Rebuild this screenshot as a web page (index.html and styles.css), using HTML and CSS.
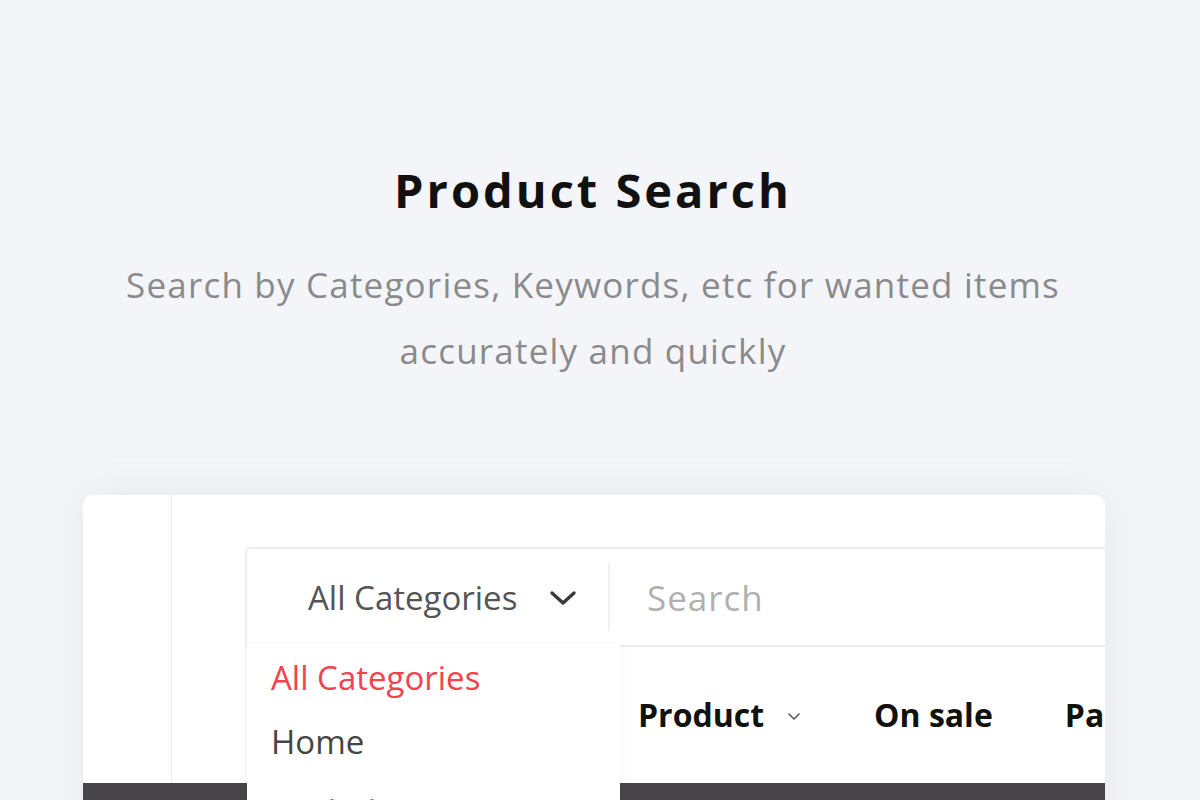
FILE: index.html
```html
<!DOCTYPE html>
<html>
<head>
<meta charset="utf-8">
<link rel="stylesheet" href="styles.css">
</head>
<body>
<section class="hero">
  <h1 class="title">Product Search</h1>
  <p class="subtitle">Search by Categories, Keywords, etc for wanted items<br>accurately and quickly</p>
</section>
<div class="card">
  <div class="side"></div>
  <div class="main">
    <div class="search-wrap">
      <div class="search">
        <div class="cat">
          <span>All Categories</span>
          <svg class="chev" width="28" height="18" viewBox="0 0 28 18"><polyline points="3,4 14,14 25,4" fill="none" stroke="#3a3a3a" stroke-width="3.4" stroke-linecap="round" stroke-linejoin="round"/></svg>
        </div>
        <div class="divider"></div>
        <div class="input">Search</div>
      </div>
      <div class="dropdown">
        <div class="opt active">All Categories</div>
        <div class="opt">Home</div>
        <div class="opt sub active">Clothing</div>
      </div>
    </div>
    <nav class="nav">
      <span class="nav-item current">Home</span>
      <span class="nav-item">Product <svg class="small-chev" width="16" height="10" viewBox="0 0 16 10"><polyline points="3,3 8,8 13,3" fill="none" stroke="#555" stroke-width="1.6" stroke-linecap="round" stroke-linejoin="round"/></svg></span>
      <span class="nav-item">On sale</span>
      <span class="nav-item">Partners</span>
    </nav>
  </div>
  <div class="darkbar"></div>
</div>
</body>
</html>
```

FILE: styles.css
```css
html, body {
  margin: 0;
  padding: 0;
}
body {
  background: #f4f5f8;
  font-family: "Open Sans", "Lato", sans-serif;
  height: 800px;
  overflow: hidden;
}
.hero {
  text-align: center;
  padding: 160px 14px 0 0;
}
.title {
  margin: 0;
  font-size: 47px;
  font-weight: 700;
  letter-spacing: 3px;
  color: #111;
  line-height: 60px;
}
.subtitle {
  margin: 32px 0 0;
  font-size: 35px;
  letter-spacing: 1.2px;
  line-height: 66px;
  color: #8a8a8c;
}
.card {
  margin: 111px 0 0 83px;
  width: 1022px;
  height: 400px;
  background: #fff;
  border-radius: 10px 10px 0 0;
  box-shadow: 0 0 40px rgba(170, 175, 190, 0.18);
  overflow: hidden;
  display: grid;
  grid-template-columns: 89px 1fr;
  grid-template-rows: 288px 20px;
}
.side {
  border-right: 1px solid #ececec;
}
.main {
  position: relative;
  padding: 52px 0 0 73px;
}
.search-wrap {
  position: relative;
  width: 1000px;
}
.search {
  display: flex;
  align-items: center;
  height: 96px;
  border: 2px solid #ededed;
  border-radius: 6px 0 0 0;
}
.cat {
  display: flex;
  align-items: center;
  gap: 32px;
  padding-left: 61px;
  width: 361px;
  box-sizing: border-box;
  font-size: 33px;
  color: #555;
}
.chev {
  margin-top: 2px;
}
.divider {
  width: 2px;
  height: 68px;
  background: #efefef;
}
.input {
  padding-left: 37px;
  font-size: 35px;
  letter-spacing: 1px;
  color: #b0b0b0;
}
.dropdown {
  position: absolute;
  left: 2px;
  top: 97px;
  width: 373px;
  height: 200px;
  background: #fff;
  box-shadow: 0 2px 10px rgba(0, 0, 0, 0.06);
  padding-top: 2px;
  box-sizing: border-box;
  z-index: 2;
}
.opt {
  padding-left: 24px;
  font-size: 33px;
  line-height: 64px;
  color: #454545;
}
.opt.active {
  color: #f4424f;
}
.opt.sub {
  padding-left: 60px;
  margin-top: 6px;
}
.nav {
  display: flex;
  align-items: center;
  height: 135px;
  white-space: nowrap;
}
.nav-item {
  font-size: 32px;
  font-weight: 700;
  color: #111;
  display: inline-flex;
  align-items: center;
  gap: 22px;
  margin-right: 72px;
}
.nav-item.current {
  color: #f57a3a;
  width: 330px;
  margin-right: 63px;
}
.small-chev {
  margin-top: 2px;
}
.darkbar {
  grid-column: 1 / 3;
  background: #47454a;
}
```
